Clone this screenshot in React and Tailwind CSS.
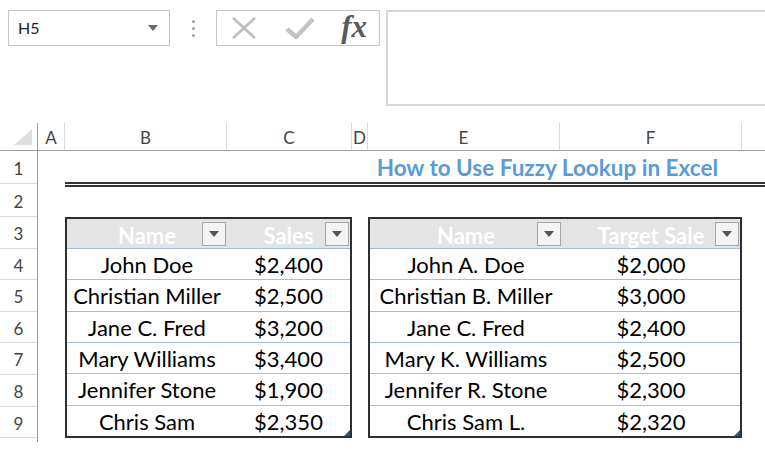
import { useMemo } from 'react'

const font = { fontFamily: 'Lato, "Open Sans", sans-serif' }

const left = [
  ['John Doe', '$2,400'],
  ['Christian Miller', '$2,500'],
  ['Jane C. Fred', '$3,200'],
  ['Mary Williams', '$3,400'],
  ['Jennifer Stone', '$1,900'],
  ['Chris Sam', '$2,350'],
]

const right = [
  ['John A. Doe', '$2,000'],
  ['Christian B. Miller', '$3,000'],
  ['Jane C. Fred', '$2,400'],
  ['Mary K. Williams', '$2,500'],
  ['Jennifer R. Stone', '$2,300'],
  ['Chris Sam L.', '$2,320'],
]

function FilterButton() {
  return (
    <div className="absolute right-[1px] bottom-[2px] w-[24px] h-[24px] border border-[#a6a6a6] bg-[#f4f4f4] flex items-center justify-center">
      <svg width="10" height="6" viewBox="0 0 10 6">
        <path d="M0 0 L10 0 L5 6 Z" fill="#555" />
      </svg>
    </div>
  )
}

function Table({ cols, widths, rows }) {
  return (
    <div className="relative h-full border-2 border-[#2e2e2e] flex flex-col text-[22px] text-black" style={font}>
      <div className="flex h-[30px] bg-[#e4e4e4] border-b border-[#9bc2e6]">
        {cols.map((c, i) => (
          <div key={c} className={`relative flex items-center justify-center pt-[3px] font-bold text-white ${widths[i]}`}>
            {c}
            <FilterButton />
          </div>
        ))}
      </div>
      {rows.map((r, ri) => (
        <div key={ri} className={`flex flex-1 items-center pt-[2px] ${ri > 0 ? 'border-t border-[#9bc2e6]' : ''}`}>
          {r.map((v, i) => (
            <div key={i} className={`text-center leading-none ${widths[i]}`}>{v}</div>
          ))}
        </div>
      ))}
      <div className="absolute right-0 bottom-0 w-0 h-0 border-l-[6px] border-l-transparent border-b-[6px] border-b-[#2f4d9e]" />
    </div>
  )
}

export default function App() {
  const rowNums = useMemo(() => [1, 2, 3, 4, 5, 6, 7, 8, 9], [])
  const colHeads = [
    ['A', 'w-[27px]'],
    ['B', 'w-[162px]'],
    ['C', 'w-[125px]'],
    ['D', 'w-[16px]'],
    ['E', 'w-[192px]'],
    ['F', 'w-[182px]'],
  ]

  return (
    <div className="w-[765px] h-[451px] bg-white overflow-hidden" style={font}>
      {/* formula bar */}
      <div className="flex items-start pt-[10px] h-[123px]">
        <div className="ml-[8px] w-[162px] h-[36px] border border-[#c6c6c6] flex items-center justify-between pl-[9px] pr-[11px]">
          <span className="text-[16px] text-[#222]">H5</span>
          <svg width="10" height="6" viewBox="0 0 10 6">
            <path d="M0 0 L10 0 L5 6 Z" fill="#6b6b6b" />
          </svg>
        </div>
        <div className="w-[46px] h-[36px] flex flex-col items-center justify-center gap-[4px]">
          <div className="w-[3px] h-[3px] rounded-full bg-[#a0a0a0]" />
          <div className="w-[3px] h-[3px] rounded-full bg-[#a0a0a0]" />
          <div className="w-[3px] h-[3px] rounded-full bg-[#a0a0a0]" />
        </div>
        <div className="w-[164px] h-[36px] border border-[#c6c6c6] flex items-center pl-[14px] pr-[12px]">
          <svg width="26" height="22" viewBox="0 0 26 22">
            <path d="M2 1 L24 21 M24 1 L2 21" stroke="#bdbdbd" strokeWidth="2.5" fill="none" />
          </svg>
          <svg width="30" height="24" viewBox="0 0 30 24" className="ml-[28px]">
            <path d="M2 13 L11 21 L28 3" stroke="#c4c4c4" strokeWidth="4.5" fill="none" strokeLinejoin="round" />
          </svg>
          <span className="ml-auto text-[31px] italic font-bold text-[#5a5a5a] leading-none pb-[4px]" style={{ fontFamily: '"Liberation Serif", serif' }}>fx</span>
        </div>
        <div className="ml-[6px] flex-1 h-[96px] border-2 border-r-0 border-[#d6d6d6]" />
      </div>

      {/* sheet */}
      <div className="flex">
        {/* row header column */}
        <div className="w-[38px] shrink-0 border-r border-[#9f9f9f] h-[319px]">
          <div className="h-[28px] border-b border-[#9f9f9f] relative">
            <div className="absolute right-[5px] bottom-[5px] w-0 h-0 border-l-[18px] border-l-transparent border-b-[16px] border-b-[#dfdfdf]" />
          </div>
          {rowNums.map((n, i) => (
            <div key={n} className={`flex items-center justify-center pt-[3px] border-b border-[#dadada] text-[17px] text-[#444] ${i < 2 ? 'h-[33px]' : 'h-[31.6px]'}`}>
              {n}
            </div>
          ))}
        </div>

        <div className="flex-1 flex flex-col">
          {/* column headers */}
          <div className="flex h-[28px] border-b border-[#9f9f9f] text-[17px] text-[#444]">
            {colHeads.map(([l, w]) => (
              <div key={l} className={`${w} flex items-center justify-center pt-[2px] border-r border-[#dadada]`}>{l}</div>
            ))}
            <div className="flex-1" />
          </div>

          {/* row 1: title */}
          <div className="flex h-[36px]">
            <div className="w-[27px]" />
            <div className="flex-1 border-b-[5px] border-double border-[#333] flex items-end justify-end pr-[47px] pb-[3px]">
              <span className="font-bold text-[22.5px] text-[#5b9bd5] leading-none">How to Use Fuzzy Lookup in Excel</span>
            </div>
          </div>

          {/* row 2 */}
          <div className="h-[30px]" />

          {/* tables rows 3-9 */}
          <div className="flex h-[221px]">
            <div className="w-[27px]" />
            <div className="w-[287px]">
              <Table cols={['Name', 'Sales']} widths={['w-[160px]', 'w-[123px]']} rows={left} />
            </div>
            <div className="w-[16px]" />
            <div className="w-[374px]">
              <Table cols={['Name', 'Target Sale']} widths={['w-[192px]', 'w-[178px]']} rows={right} />
            </div>
          </div>
        </div>
      </div>
    </div>
  )
}
